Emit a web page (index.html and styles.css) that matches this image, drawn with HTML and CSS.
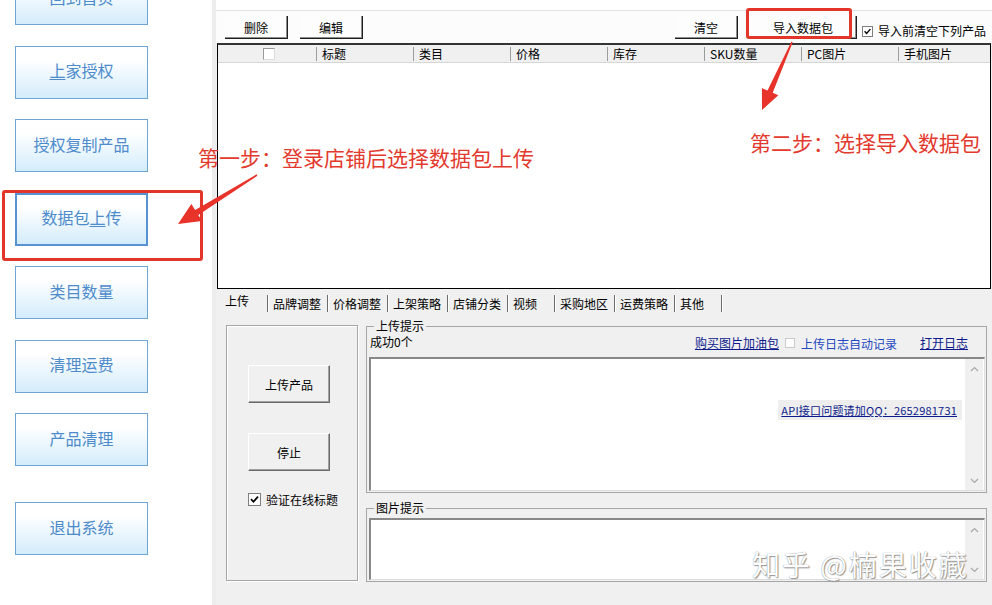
FILE: index.html
```html
<!DOCTYPE html>
<html lang="zh-CN">
    <head>
        <meta charset="utf-8">
        <title>数据包上传</title>
        <meta name="viewport" content="width=device-width, initial-scale=1.0">
        <link rel="stylesheet" href="styles.css">
    </head>
    <body>
        <div class="app">
            <aside class="sidebar">
                <button class="nav-btn first">回到首页</button>
                <button class="nav-btn"><u>上</u>家授权</button>
                <button class="nav-btn">授权复制产品</button>
                <button class="nav-btn active">数据包<u>上</u>传</button>
                <button class="nav-btn">类目数量</button>
                <button class="nav-btn">清理运费</button>
                <button class="nav-btn">产品清理</button>
                <button class="nav-btn exit">退出系统</button>
            </aside>

            <main class="main">
                <div class="topbar"></div>

                <div class="toolbar">
                    <button class="tb-btn">删除</button>
                    <button class="tb-btn">编辑</button>
                    <span class="spacer"></span>
                    <button class="tb-btn">清空</button>
                    <button class="tb-btn wide">导入数据包</button>
                    <label class="check top-check">
                        <span class="box checked">
                            <svg viewBox="0 0 11 11"><path d="M2 5.2 L4.4 7.8 L9 2.6" /></svg>
                        </span>
                        导入前清空下列产品
                    </label>
                </div>

                <div class="list">
                    <div class="list-head">
                        <div class="col col-check"><span class="head-box"></span></div>
                        <div class="col">标题</div>
                        <div class="col">类目</div>
                        <div class="col">价格</div>
                        <div class="col">库存</div>
                        <div class="col">SKU数量</div>
                        <div class="col">PC图片</div>
                        <div class="col">手机图片</div>
                    </div>
                </div>

                <div class="tabs">
                    <span class="tab on">上传</span>
                    <span class="tab">品牌调整</span>
                    <span class="tab">价格调整</span>
                    <span class="tab">上架策略</span>
                    <span class="tab">店铺分类</span>
                    <span class="tab short">视频</span>
                    <span class="tab">采购地区</span>
                    <span class="tab">运费策略</span>
                    <span class="tab short">其他</span>
                </div>

                <div class="panel">
                    <div class="group actions">
                        <button class="win-btn">上传产品</button>
                        <button class="win-btn">停止</button>
                        <label class="check verify">
                            <span class="box checked big">
                                <svg viewBox="0 0 11 11"><path d="M2 5.2 L4.4 7.8 L9 2.6" /></svg>
                            </span>
                            验证在线标题
                        </label>
                    </div>

                    <div class="side">
                        <fieldset class="frame">
                            <legend>上传提示</legend>
                            <div class="info">
                                <span>成功0个</span>
                                <span class="info-links">
                                    <a href="#" class="link">购买图片加油包</a>
                                    <span class="box light"></span>
                                    <span class="log-label">上传日志自动记录</span>
                                    <a href="#" class="link open-log">打开日志</a>
                                </span>
                            </div>
                            <div class="memo tall">
                                <div class="memo-body">
                                    <div class="api-line"><a href="#" class="link">API接口问题请加QQ：2652981731</a></div>
                                </div>
                                <div class="scroll">
                                    <svg viewBox="0 0 9 6"><path d="M1 5 L4.5 1.5 L8 5" /></svg>
                                    <svg viewBox="0 0 9 6"><path d="M1 1 L4.5 4.5 L8 1" /></svg>
                                </div>
                            </div>
                        </fieldset>

                        <fieldset class="frame pics">
                            <legend>图片提示</legend>
                            <div class="memo short-memo">
                                <div class="memo-body"></div>
                                <div class="scroll">
                                    <svg viewBox="0 0 9 6"><path d="M1 5 L4.5 1.5 L8 5" /></svg>
                                    <svg viewBox="0 0 9 6"><path d="M1 1 L4.5 4.5 L8 1" /></svg>
                                </div>
                            </div>
                        </fieldset>
                    </div>
                </div>
            </main>
        </div>

        <!-- annotations drawn over the screenshot -->
        <div class="mark mark-side"></div>
        <div class="mark mark-import"></div>
        <svg class="arrows" viewBox="0 0 992 605">
            <polygon points="257.4,175.7 198.3,215 202,220.9 178,224 191.4,203.9 195.1,209.9 256.6,174.3" />
            <polygon points="792.7,42.3 772.7,92.8 778.3,95.3 762,110 761.9,88.1 767.5,90.6 791.3,41.7" />
        </svg>
        <div class="note note-one">第一步：登录店铺后选择数据包上传</div>
        <div class="note note-two">第二步：选择导入数据包</div>
        <div class="watermark">知乎 @楠果收藏</div>
    </body>
</html>
```

FILE: styles.css
```css
*, *::before, *::after {
    box-sizing: border-box;
}

html, body {
    margin: 0;
}

body {
    position: relative;
    width: 992px;
    height: 605px;
    overflow: hidden;
    font-family: "Noto Sans CJK SC", "Noto Sans", sans-serif;
    font-size: 12px;
    color: #000;
    background: #fff;
}

button {
    font: inherit;
    color: inherit;
    cursor: pointer;
}

.app {
    display: flex;
    height: 605px;
}

/* Left navigation */
.sidebar {
    flex: none;
    width: 216px;
    display: flex;
    flex-direction: column;
    align-items: flex-start;
    gap: 20.5px;
    padding-left: 15px;
    background: #fff;
    border-right: 4px solid #ececec;
}

.nav-btn {
    flex: none;
    width: 133px;
    height: 53px;
    padding: 0 0 4px;
    border: 1px solid #6fa5d4;
    background: linear-gradient(#fff 25%, #d3ecfb);
    color: #4d8bcb;
    font-size: 16px;
}

.nav-btn u {
    text-decoration-thickness: 1px;
    text-underline-offset: 2px;
}

.nav-btn.first {
    margin-top: -28px;
}

.nav-btn.active {
    border: 2px solid #5793d2;
}

.nav-btn.exit {
    margin-top: 15.5px;
}

/* Main window */
.main {
    flex: 1;
    min-width: 0;
    display: flex;
    flex-direction: column;
    background: #f0f0f0;
}

.topbar {
    height: 11px;
    background: #fff;
    border-bottom: 1px solid #e2e2e2;
}

.toolbar {
    height: 32px;
    display: flex;
    align-items: flex-start;
    padding: 5px 6px 0 9px;
    background: #fcfcfc;
}

.tb-btn {
    width: 63px;
    height: 23px;
    padding: 0;
    border: 0;
    border-right: 1px solid #1e1e1e;
    border-bottom: 1px solid #1e1e1e;
    box-shadow: inset -1px -1px 0 #8c8c8c;
    background: #fdfdfd;
    font-size: 12px;
}

.tb-btn + .tb-btn {
    margin-left: 12px;
}

.tb-btn.wide {
    width: 107px;
}

.spacer {
    flex: 1;
}

.check {
    display: flex;
    align-items: center;
    gap: 5px;
    white-space: nowrap;
}

.top-check {
    margin: 9px 0 0 5px;
    height: 12px;
    line-height: 12px;
}

.box {
    flex: none;
    display: inline-block;
    width: 11px;
    height: 11px;
    border: 1px solid #7f7f7f;
    background: #fff;
}

.box svg {
    display: block;
    width: 100%;
    height: 100%;
    fill: none;
    stroke: #000;
    stroke-width: 1.7;
}

.box.big {
    width: 13px;
    height: 13px;
}

.box.light {
    width: 10px;
    height: 10px;
    border-color: #c9c9c9;
}

/* Product list */
.list {
    height: 246px;
    margin: 0 1px;
    border: 1px solid #000;
    border-top: 2px solid #333;
    background: #fff;
}

.list-head {
    display: grid;
    grid-template-columns: 98px repeat(6, 97px) 1fr;
    height: 18px;
    background: #f0f0f0;
    border-bottom: 1px solid #d6d6d6;
}

.col {
    display: flex;
    align-items: center;
    padding-left: 5px;
    line-height: 14px;
    white-space: nowrap;
}

.col + .col {
    margin: 2px 0 1px;
    border-left: 1px solid #9c9c9c;
}

.col-check {
    justify-content: center;
    padding: 0 0 0 4px;
}

.head-box {
    width: 12px;
    height: 12px;
    border: 1px solid #9a9a9a;
    border-right-color: #dcdcdc;
    border-bottom-color: #dcdcdc;
    background: #fff;
}

/* Tabs */
.tabs {
    height: 25px;
    display: flex;
    align-items: flex-start;
    padding: 6px 0 0 2px;
    font-size: 12px;
}

.tab {
    height: 17px;
    line-height: 17px;
    padding: 0 6px 0 5px;
    border-right: 1px solid #6b6b6b;
    box-shadow: 1px 0 0 #fff;
    white-space: nowrap;
}

.tab.on {
    width: 50px;
    padding-left: 7px;
    line-height: 12px;
}

.tab.short {
    min-width: 47px;
}

/* Upload panel */
.panel {
    flex: 1;
    display: flex;
    align-items: flex-start;
    padding: 5px 5px 0 10px;
}

.group {
    border: 1px solid #a6a6a6;
    box-shadow: inset 1px 1px 0 #fff, 1px 1px 0 #fff;
}

.actions {
    flex: none;
    width: 132px;
    height: 256px;
    margin-top: 6px;
    display: flex;
    flex-direction: column;
    align-items: flex-start;
    padding: 39px 0 0 21px;
}

.win-btn {
    width: 82px;
    height: 38px;
    padding: 0;
    border: 1px solid;
    border-color: #fff #696969 #696969 #fff;
    box-shadow: inset -1px -1px 0 #a0a0a0;
    background: #f0f0f0;
    font-size: 12px;
}

.win-btn + .win-btn {
    margin-top: 30px;
}

.verify {
    margin-top: 22px;
    line-height: 13px;
}

.side {
    flex: 1;
    min-width: 0;
    margin-left: 8px;
}

.frame {
    margin: 0;
    padding: 0 1px 1px 2px;
    min-width: 0;
    border: 1px solid #a6a6a6;
}

.frame legend {
    margin-left: 5px;
    padding: 0 2px;
    line-height: 14px;
}

.frame.pics {
    margin-top: 8px;
}

.info {
    height: 24px;
    display: flex;
    align-items: flex-start;
    padding: 2px 17px 0 1px;
    line-height: 14px;
}

.info-links {
    margin-left: auto;
    display: flex;
    align-items: center;
    gap: 6px;
}

.link {
    color: #0c1a8c;
    text-decoration: underline;
    text-underline-offset: 1px;
}

.log-label {
    color: #2347c2;
    padding-top: 2px;
}

.open-log {
    margin-left: 17px;
}

.memo {
    display: flex;
    border-top: 2px solid #888;
    border-left: 2px solid #888;
    border-right: 1px solid #dedede;
    border-bottom: 1px solid #dedede;
    background: #fff;
}

.memo.tall {
    height: 134px;
}

.memo.short-memo {
    height: 62px;
    margin-top: 3px;
}

.memo-body {
    flex: 1;
}

.api-line {
    margin-top: 41px;
    display: flex;
    justify-content: flex-end;
    padding-right: 3px;
}

.api-line .link {
    height: 20px;
    line-height: 20px;
    padding: 0 5px 0 3px;
    background: #eeeeee;
    font-size: 11px;
    letter-spacing: 0.2px;
}

.scroll {
    flex: none;
    width: 18px;
    margin-right: 1px;
    display: flex;
    flex-direction: column;
    justify-content: space-between;
    align-items: center;
    padding: 7px 0 6px;
    background: #f0f0f0;
}

.scroll svg {
    width: 9px;
    height: 6px;
    fill: none;
    stroke: #a8a8a8;
    stroke-width: 1.2;
}

/* Annotation overlay */
.mark {
    position: absolute;
    border: 3px solid #e2362b;
    border-radius: 3px;
}

.mark-side {
    left: 2px;
    top: 190px;
    width: 201px;
    height: 71px;
}

.mark-import {
    left: 746px;
    top: 8px;
    width: 106px;
    height: 31px;
}

.arrows {
    position: absolute;
    left: 0;
    top: 0;
    width: 992px;
    height: 605px;
    pointer-events: none;
    fill: #e8332a;
}

.note {
    position: absolute;
    font-size: 21px;
    line-height: 21px;
    color: #e33a2e;
    white-space: nowrap;
}

.note-one {
    left: 198px;
    top: 147px;
}

.note-two {
    left: 750px;
    top: 132px;
}

.watermark {
    position: absolute;
    left: 752px;
    top: 548px;
    font-size: 28px;
    line-height: 32px;
    letter-spacing: 2px;
    color: #fff;
    white-space: nowrap;
    text-shadow: 0 0 1px #777, 1px 1px 1px #999;
}
```
